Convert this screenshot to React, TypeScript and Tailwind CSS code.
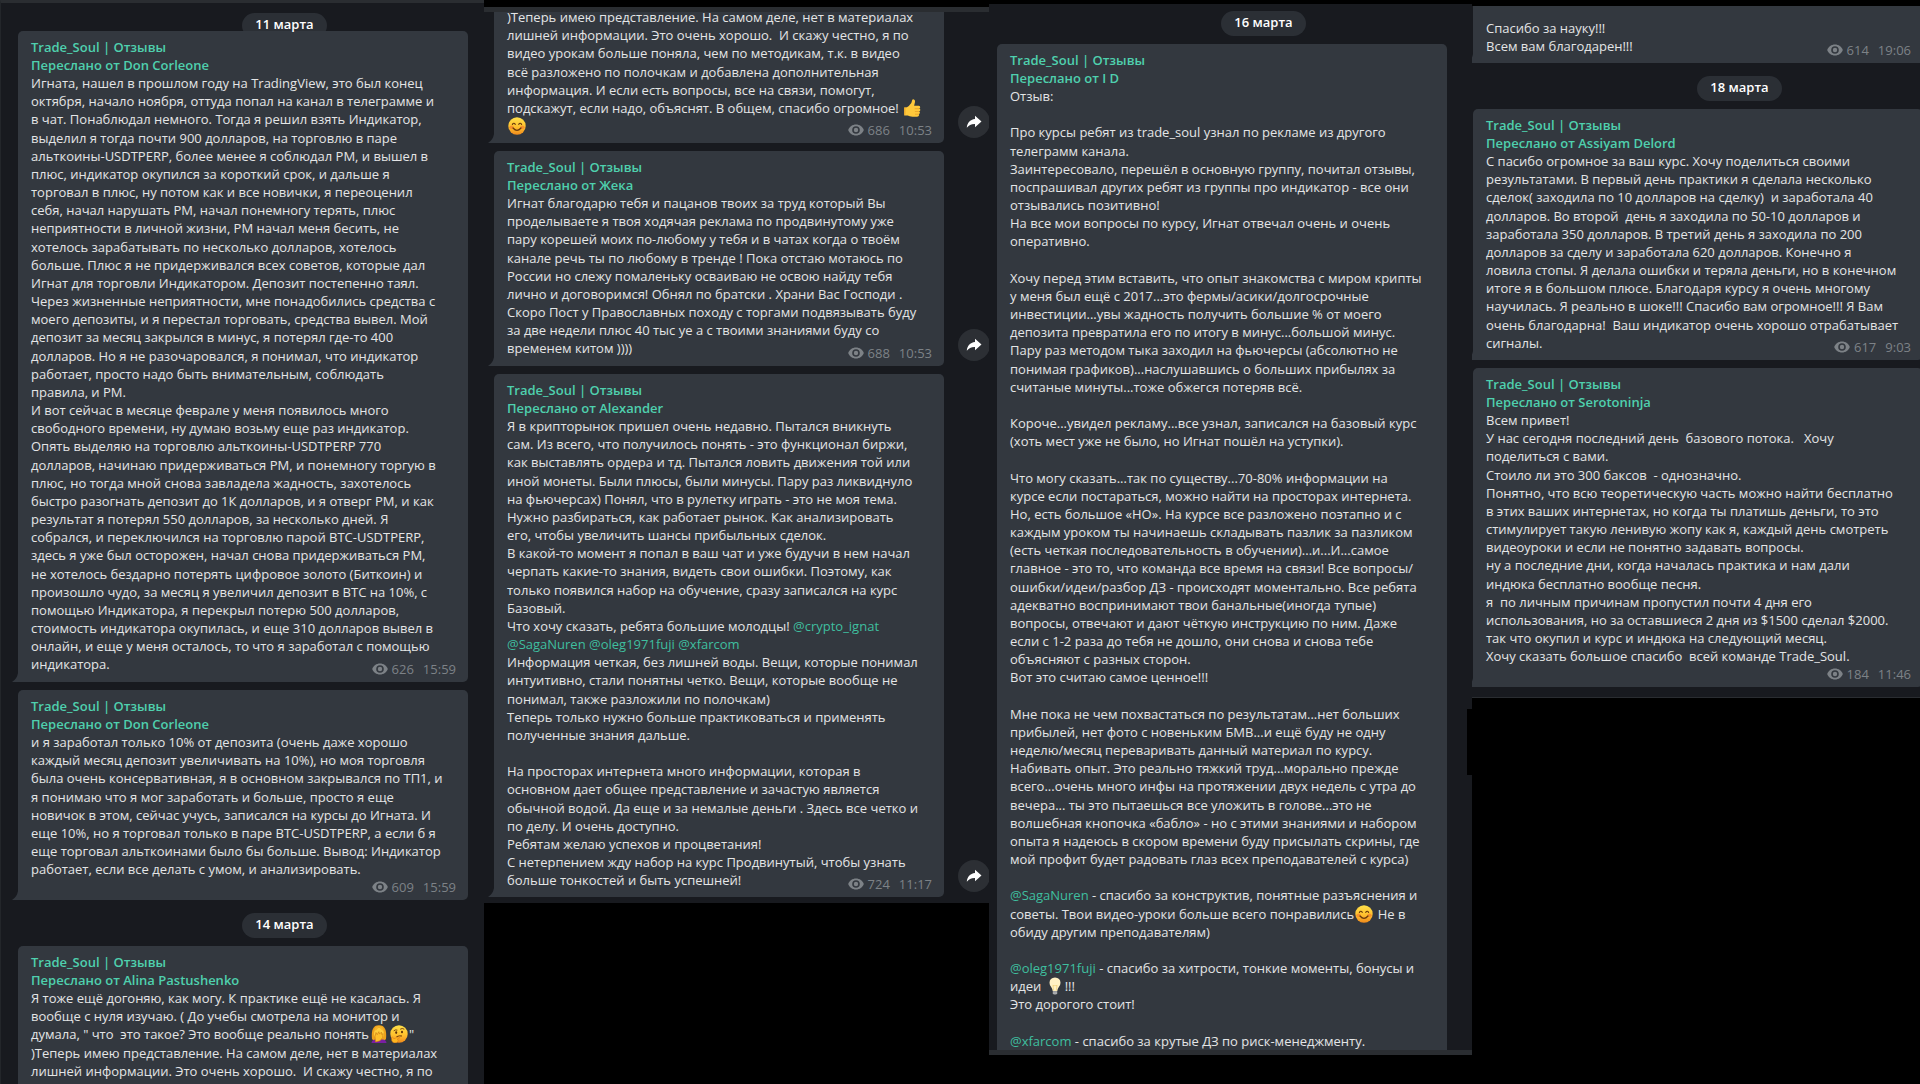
import type { ReactNode } from "react";

type EmojiName = "facepalm" | "thinking" | "thumb" | "smile" | "bulb";

type MessageData = {
  author?: string;
  lines: string[];
  views?: string;
  time?: string;
  share?: boolean;
  /** The views and time take a row of their own under the text. */
  metaRow?: boolean;
};

const column1a: MessageData[] = [
  {
    author: "Don Corleone",
    views: "626",
    time: "15:59",
    lines: [
      "Игната, нашел в прошлом году на TradingView, это был конец",
      "октября, начало ноября, оттуда попал на канал в телеграмме и",
      "в чат. Понаблюдал немного. Тогда я решил взять Индикатор,",
      "выделил я тогда почти 900 долларов, на торговлю в паре",
      "альткоины-USDTPERP, более менее я соблюдал РМ, и вышел в",
      "плюс, индикатор окупился за короткий срок, и дальше я",
      "торговал в плюс, ну потом как и все новички, я переоценил",
      "себя, начал нарушать РМ, начал понемногу терять, плюс",
      "неприятности в личной жизни, РМ начал меня бесить, не",
      "хотелось зарабатывать по несколько долларов, хотелось",
      "больше. Плюс я не придерживался всех советов, которые дал",
      "Игнат для торговли Индикатором. Депозит постепенно таял.",
      "Через жизненные неприятности, мне понадобились средства с",
      "моего депозиты, и я перестал торговать, средства вывел. Мой",
      "депозит за месяц закрылся в минус, я потерял где-то 400",
      "долларов. Но я не разочаровался, я понимал, что индикатор",
      "работает, просто надо быть внимательным, соблюдать",
      "правила, и РМ.",
      "И вот сейчас в месяце феврале у меня появилось много",
      "свободного времени, ну думаю возьму еще раз индикатор.",
      "Опять выделяю на торговлю альткоины-USDTPERP 770",
      "долларов, начинаю придерживаться РМ, и понемногу торгую в",
      "плюс, но тогда мной снова завладела жадность, захотелось",
      "быстро разогнать депозит до 1К долларов, и я отверг РМ, и как",
      "результат я потерял 550 долларов, за несколько дней. Я",
      "собрался, и переключился на торговлю парой BTC-USDTPERP,",
      "здесь я уже был осторожен, начал снова придерживаться РМ,",
      "не хотелось бездарно потерять цифровое золото (Биткоин) и",
      "произошло чудо, за месяц я увеличил депозит в BTC на 10%, с",
      "помощью Индикатора, я перекрыл потерю 500 долларов,",
      "стоимость индикатора окупилась, и еще 310 долларов вывел в",
      "онлайн, и еще у меня осталось, то что я заработал с помощью",
      "индикатора.",
    ],
  },
  {
    author: "Don Corleone",
    views: "609",
    time: "15:59",
    metaRow: true,
    lines: [
      "и я заработал только 10% от депозита (очень даже хорошо",
      "каждый месяц депозит увеличивать на 10%), но моя торговля",
      "была очень консервативная, я в основном закрывался по ТП1, и",
      "я понимаю что я мог заработать и больше, просто я еще",
      "новичок в этом, сейчас учусь, записался на курсы до Игната. И",
      "еще 10%, но я торговал только в паре BTC-USDTPERP, а если б я",
      "еще торговал альткоинами было бы больше. Вывод: Индикатор",
      "работает, если все делать с умом, и анализировать.",
    ],
  },
];

const column1b: MessageData = {
  author: "Alina Pastushenko",
  lines: [
    "Я тоже ещё догоняю, как могу. К практике ещё не касалась. Я",
    "вообще с нуля изучаю. ( До учебы смотрела на монитор и",
    'думала, " что  это такое? Это вообще реально понять{facepalm}{thinking}"',
    ")Теперь имею представление. На самом деле, нет в материалах",
    "лишней информации. Это очень хорошо.  И скажу честно, я по",
  ],
};

const column2: MessageData[] = [
  {
    views: "686",
    time: "10:53",
    share: true,
    lines: [
      ")Теперь имею представление. На самом деле, нет в материалах",
      "лишней информации. Это очень хорошо.  И скажу честно, я по",
      "видео урокам больше поняла, чем по методикам, т.к. в видео",
      "всё разложено по полочкам и добавлена дополнительная",
      "информация. И если есть вопросы, все на связи, помогут,",
      "подскажут, если надо, объяснят. В общем, спасибо огромное! {thumb}",
      "{smile}",
    ],
  },
  {
    author: "Жека",
    views: "688",
    time: "10:53",
    share: true,
    lines: [
      "Игнат благодарю тебя и пацанов твоих за труд который Вы",
      "проделываете я твоя ходячая реклама по продвинутому уже",
      "пару корешей моих по-любому у тебя и в чатах когда о твоём",
      "канале речь ты по любому в тренде ! Пока отстаю мотаюсь по",
      "России но слежу помаленьку осваиваю не освою найду тебя",
      "лично и договоримся! Обнял по братски . Храни Вас Господи .",
      "Скоро Пост у Православных походу с торгами подвязывать буду",
      "за две недели плюс 40 тыс уе а с твоими знаниями буду со",
      "временем китом ))))",
    ],
  },
  {
    author: "Alexander",
    views: "724",
    time: "11:17",
    share: true,
    lines: [
      "Я в крипторынок пришел очень недавно. Пытался вникнуть",
      "сам. Из всего, что получилось понять - это функционал биржи,",
      "как выставлять ордера и тд. Пытался ловить движения той или",
      "иной монеты. Были плюсы, были минусы. Пару раз ликвиднуло",
      "на фьючерсах) Понял, что в рулетку играть - это не моя тема.",
      "Нужно разбираться, как работает рынок. Как анализировать",
      "его, чтобы увеличить шансы прибыльных сделок.",
      "В какой-то момент я попал в ваш чат и уже будучи в нем начал",
      "черпать какие-то знания, видеть свои ошибки. Поэтому, как",
      "только появился набор на обучение, сразу записался на курс",
      "Базовый.",
      "Что хочу сказать, ребята большие молодцы! @crypto_ignat",
      "@SagaNuren @oleg1971fuji @xfarcom",
      "Информация четкая, без лишней воды. Вещи, которые понимал",
      "интуитивно, стали понятны четко. Вещи, которые вообще не",
      "понимал, также разложили по полочкам)",
      "Теперь только нужно больше практиковаться и применять",
      "полученные знания дальше.",
      "",
      "На просторах интернета много информации, которая в",
      "основном дает общее представление и зачастую является",
      "обычной водой. Да еще и за немалые деньги . Здесь все четко и",
      "по делу. И очень доступно.",
      "Ребятам желаю успехов и процветания!",
      "С нетерпением жду набор на курс Продвинутый, чтобы узнать",
      "больше тонкостей и быть успешней!",
    ],
  },
];

const column3: MessageData = {
  author: "I D",
  lines: [
    "Отзыв:",
    "",
    "Про курсы ребят из trade_soul узнал по рекламе из другого",
    "телеграмм канала.",
    "Заинтересовало, перешёл в основную группу, почитал отзывы,",
    "поспрашивал других ребят из группы про индикатор - все они",
    "отзывались позитивно!",
    "На все мои вопросы по курсу, Игнат отвечал очень и очень",
    "оперативно.",
    "",
    "Хочу перед этим вставить, что опыт знакомства с миром крипты",
    "у меня был ещё с 2017...это фермы/асики/долгосрочные",
    "инвестиции...увы жадность получить большие % от моего",
    "депозита превратила его по итогу в минус...большой минус.",
    "Пару раз методом тыка заходил на фьючерсы (абсолютно не",
    "понимая графиков)...наслушавшись о больших прибылях за",
    "считаные минуты...тоже обжегся потеряв всё.",
    "",
    "Короче...увидел рекламу...все узнал, записался на базовый курс",
    "(хоть мест уже не было, но Игнат пошёл на уступки).",
    "",
    "Что могу сказать...так по существу...70-80% информации на",
    "курсе если постараться, можно найти на просторах интернета.",
    "Но, есть большое «НО». На курсе все разложено поэтапно и с",
    "каждым уроком ты начинаешь складывать пазлик за пазликом",
    "(есть четкая последовательность в обучении)...и...И...самое",
    "главное - это то, что команда все время на связи! Все вопросы/",
    "ошибки/идеи/разбор ДЗ - происходят моментально. Все ребята",
    "адекватно воспринимают твои банальные(иногда тупые)",
    "вопросы, отвечают и дают чёткую инструкцию по ним. Даже",
    "если с 1-2 раза до тебя не дошло, они снова и снова тебе",
    "объясняют с разных сторон.",
    "Вот это считаю самое ценное!!!",
    "",
    "Мне пока не чем похвастаться по результатам...нет больших",
    "прибылей, нет фото с новеньким БМВ...и ещё буду не одну",
    "неделю/месяц переваривать данный материал по курсу.",
    "Набивать опыт. Это реально тяжкий труд...морально прежде",
    "всего...очень много инфы на протяжении двух недель с утра до",
    "вечера... ты это пытаешься все уложить в голове...это не",
    "волшебная кнопочка «бабло» - но с этими знаниями и набором",
    "опыта я надеюсь в скором времени буду присылать скрины, где",
    "мой профит будет радовать глаз всех преподавателей с курса)",
    "",
    "@SagaNuren - спасибо за конструктив, понятные разъяснения и",
    "советы. Твои видео-уроки больше всего понравились{smile} Не в",
    "обиду другим преподавателям)",
    "",
    "@oleg1971fuji - спасибо за хитрости, тонкие моменты, бонусы и",
    "идеи {bulb}!!!",
    "Это дорогого стоит!",
    "",
    "@xfarcom - спасибо за крутые ДЗ по риск-менеджменту.",
  ],
};

const column4a: MessageData = {
  views: "614",
  time: "19:06",
  lines: ["Спасибо за науку!!!", "Всем вам благодарен!!!"],
};

const column4b: MessageData[] = [
  {
    author: "Assiyam Delord",
    views: "617",
    time: "9:03",
    lines: [
      "С пасибо огромное за ваш курс. Хочу поделиться своими",
      "результатами. В первый день практики я сделала несколько",
      "сделок( заходила по 10 долларов на сделку)  и заработала 40",
      "долларов. Во второй  день я заходила по 50-10 долларов и",
      "заработала 350 долларов. В третий день я заходила по 200",
      "долларов за сделу и заработала 620 долларов. Конечно я",
      "ловила стопы. Я делала ошибки и теряла деньги, но в конечном",
      "итоге я в большом плюсе. Благодаря курсу я очень многому",
      "научилась. Я реально в шоке!!! Спасибо вам огромное!!! Я Вам",
      "очень благодарна!  Ваш индикатор очень хорошо отрабатывает",
      "сигналы.",
    ],
  },
  {
    author: "Serotoninja",
    views: "184",
    time: "11:46",
    metaRow: true,
    lines: [
      "Всем привет!",
      "У нас сегодня последний день  базового потока.   Хочу",
      "поделиться с вами.",
      "Стоило ли это 300 баксов  - однозначно.",
      "Понятно, что всю теоретическую часть можно найти бесплатно",
      "в этих ваших интернетах, но когда ты платишь деньги, то это",
      "стимулирует такую ленивую жопу как я, каждый день смотреть",
      "видеоуроки и если не понятно задавать вопросы.",
      "ну а последние дни, когда началась практика и нам дали",
      "индюка бесплатно вообще песня.",
      "я  по личным причинам пропустил почти 4 дня его",
      "использования, но за оставшиеся 2 дня из $1500 сделал $2000.",
      "так что окупил и курс и индюка на следующий месяц.",
      "Хочу сказать большое спасибо  всей команде Trade_Soul.",
    ],
  },
];

function Face() {
  return (
    <>
      <defs>
        <linearGradient id="face" x1="0" y1="0" x2="0" y2="1">
          <stop offset="0" stopColor="#ffe04a" />
          <stop offset="0.55" stopColor="#ffc12e" />
          <stop offset="1" stopColor="#f08a1c" />
        </linearGradient>
      </defs>
      <circle cx="9" cy="9" r="8.7" fill="url(#face)" />
    </>
  );
}

function Emoji({ name }: { name: EmojiName }) {
  const art: Record<EmojiName, ReactNode> = {
    smile: (
      <>
        <Face />
        <ellipse cx="3.6" cy="10.2" rx="2.2" ry="1.7" fill="#f3702a" opacity="0.55" />
        <ellipse cx="14.4" cy="10.2" rx="2.2" ry="1.7" fill="#f3702a" opacity="0.55" />
        <path d="M4.4 7.4q1.4-2.4 2.9 0M10.7 7.4q1.5-2.4 2.9 0" fill="none" stroke="#6b3a0c" strokeWidth="1.1" strokeLinecap="round" />
        <path d="M5 11q4 4.600 8 0" fill="none" stroke="#6b3a0c" strokeWidth="1.2" strokeLinecap="round" />
      </>
    ),
    thinking: (
      <>
        <Face />
        <path d="M4 5.600q1.400-1.200 3-.6M10.500 4q1.800-1.300 3.500 0" fill="none" stroke="#6b3a0c" strokeWidth="0.9" strokeLinecap="round" />
        <ellipse cx="6.200" cy="7.600" rx="1" ry="1.300" fill="#5c300a" />
        <ellipse cx="12" cy="7" rx="1" ry="1.300" fill="#5c300a" />
        <path d="M6.800 11.600q2.600-1.200 4.800-.7" fill="none" stroke="#6b3a0c" strokeWidth="1" strokeLinecap="round" />
        <path d="M1.600 12.600q.9-1 1.700.2l.5 1 4.900-1.900q1.300-.2 1 .9l-2.600 1.400q1.600.2 1 1.700-.8 2-3.200 2-2.700 0-3.200-2.300z" fill="#ffb61f" stroke="#d9791a" strokeWidth="0.5" />
      </>
    ),
    facepalm: (
      <>
        <path d="M2 14Q.6 0 9 .3q8.400-.2 7 13.700l-2 2H4z" fill="#eda11c" />
        <path d="M1.500 18q.3-3.400 4-3.600h7q3.700.2 4 3.600z" fill="#7a1fa2" />
        <ellipse cx="9" cy="8.800" rx="5" ry="6" fill="#ffce3d" />
        <path d="M4 6Q7 5.400 9 2q2 3 5 4-1-5-5-5T4 6z" fill="#f4b32a" />
        <path d="M5.500 17 5 11.500l1-4 1.200 2.200 1.600-3 .8 2.400 1.800-2 .3 2.400 1.500-.9-.7 4-2.500 3.200z" fill="#ffc02b" stroke="#c87a13" strokeWidth="0.6" />
      </>
    ),
    thumb: (
      <>
        <path
          d="M1.200 8.600q2.800.1 4.600-1.500Q9 4.300 9 1.800 9.100 0 10.300.2q2.200.5 1.600 3.400l-.8 3.200h4.600q1.700.2 1.500 1.600-.2 1.100-1.200 1.200 1.600.3 1.300 1.700-.2 1-1.300 1.200 1.100.3.900 1.500-.2 1-1.200 1.100.6.4.4 1.200-.3 1.400-2 1.400H9.500q-3.100 0-4.800-1.100H1.200z"
          fill="#ffc83b"
        />
        <path d="M11.700 9.700h4.300M11.900 12.500h4M12 15.200h3.600" stroke="#e49a22" strokeWidth="0.7" fill="none" />
        <path d="M1.200 8.600h1.300v7H1.200z" fill="#f0a92b" />
      </>
    ),
    bulb: (
      <>
        <path d="M9 .4q5.300.3 5.500 5.300 0 2.600-1.800 4.500Q11.500 11.800 11.300 14H6.700q-.2-2.200-1.400-3.800-1.800-1.900-1.800-4.500Q3.700.7 9 .4z" fill="#fff1c4" />
        <path d="M7.700 13.500 6.900 8.200l1.200.9.900-.9.900.9 1.200-.9-.8 5.300" fill="none" stroke="#e9c767" strokeWidth="0.6" />
        <path d="M6.800 14h4.400v2.400q-.6 1.400-2.200 1.400t-2.200-1.400z" fill="#8d8f92" />
        <path d="M6.800 15.200h4.400M6.900 16.400h4.200" stroke="#c6c8ca" strokeWidth="0.6" />
      </>
    ),
  };
  return (
    <svg viewBox="0 0 18 18" className="mx-px inline-block size-[18px] align-top" role="img" aria-label={name}>
      {art[name]}
    </svg>
  );
}

function renderLine(line: string): ReactNode {
  return line.split(/(@\w+|\{\w+\})/).map((part, i) => {
    if (part.startsWith("@")) {
      return (
        <a key={i} href={"#" + part.slice(1)} className="text-[#3fbf9f]">
          {part}
        </a>
      );
    }
    if (part.startsWith("{")) {
      return <Emoji key={i} name={part.slice(1, -1) as EmojiName} />;
    }
    return part;
  });
}

function EyeIcon() {
  return (
    <svg viewBox="0 0 16 12" className="h-3 w-4" aria-hidden="true">
      <path d="M8 .5C4.400.500 1.400 2.700.2 6c1.200 3.300 4.200 5.500 7.800 5.500s6.600-2.200 7.800-5.500C14.600 2.700 11.600.5 8 .5z" fill="currentColor" />
      <circle cx="8" cy="6" r="3.800" fill="#33383f" />
      <circle cx="8" cy="6" r="2.200" fill="currentColor" />
    </svg>
  );
}

function ShareButton() {
  return (
    <button
      type="button"
      aria-label="Переслать"
      className="absolute bottom-[5px] left-full ml-3.5 flex size-8 items-center justify-center rounded-full bg-[#2c2f34] text-white"
    >
      <svg viewBox="0 0 16 14" className="h-3.5 w-4" aria-hidden="true">
        <path d="M9 .8 15.500 6.500 9 12.200V8.900C5.200 8.800 2.800 10 .8 12.800 1.200 8.200 4 4.600 9 4.100z" fill="currentColor" />
      </svg>
    </button>
  );
}

function Tail() {
  return (
    <svg viewBox="0 0 6 9" className="absolute bottom-0 right-full h-[9px] w-1.5" aria-hidden="true">
      <path d="M6 0v9H0q5-3 6-9z" fill="#33383f" />
    </svg>
  );
}

function Message({ data, shape = "rounded-[5px] rounded-bl-none" }: { data: MessageData; shape?: string }) {
  const { author, lines, views, time, share, metaRow } = data;
  return (
    <article className={"relative w-[450px] bg-[#33383f] px-[13px] " + shape}>
      {author && (
        <header className="pt-[7px] font-semibold leading-[18px] text-[#4fd0ae]">
          <h2>Trade_Soul | Отзывы</h2>
          <h3>Переслано от {author}</h3>
        </header>
      )}
      <div className="whitespace-pre text-[#e4e5e6] [&>p:nth-child(6n+3)]:h-[19px]">
        {lines.map((line, i) => (
          <p key={i} className="h-[18px] leading-[18px]">
            {renderLine(line)}
          </p>
        ))}
      </div>
      {time && (
        <>
          <div className={metaRow ? "h-[22px]" : "h-2"} />
          <footer className="absolute bottom-1 right-3 flex items-center gap-1 leading-[18px] text-[#7d8287]">
            <EyeIcon />
            <span>{views}</span>
            <time className="ml-[5px]">{time}</time>
          </footer>
          <Tail />
        </>
      )}
      {share && <ShareButton />}
    </article>
  );
}

function DatePill({ children }: { children: ReactNode }) {
  return (
    <div className="ml-[224px] flex h-[25px] w-[85px] items-center justify-center rounded-full bg-[#2b2f35] pb-0.5 font-semibold text-white">
      <span className="relative z-10">{children}</span>
    </div>
  );
}

export default function App() {
  return (
    <main className="grid h-screen grid-cols-[484fr_505fr_483fr_448fr] items-start overflow-hidden bg-black font-['Open_Sans','Noto_Sans',sans-serif] text-[13px]">
      <section className="flex h-screen min-w-0 flex-col overflow-hidden border-l border-t-[3px] border-l-[#23262a] border-t-[#2a2d31] bg-[#181a1f] pl-[17px]">
        <div className="mt-2.5">
          <DatePill>11 марта</DatePill>
        </div>
        <div className="-mt-[7px] flex flex-col gap-2">
          {column1a.map((m, i) => (
            <Message key={i} data={m} />
          ))}
        </div>
        <div className="mb-2 mt-[13px]">
          <DatePill>14 марта</DatePill>
        </div>
        <Message data={column1b} shape="grow rounded-t-[5px]" />
      </section>

      <section className="mt-[7px] min-w-0 overflow-hidden border-t-[5px] border-[#2a2d31] bg-[#181a1f] pb-1.5 pl-2.5">
        <div className="-mt-1 flex flex-col gap-2">
          {column2.map((m, i) => (
            <Message key={i} data={m} />
          ))}
        </div>
      </section>

      <section className="mt-1 min-w-0 overflow-hidden border-b-[5px] border-[#2a2d31] bg-[#181a1f] pl-2 pt-[7px]">
        <DatePill>16 марта</DatePill>
        <div className="mt-2">
          <Message data={column3} shape="rounded-t-[5px]" />
        </div>
      </section>

      <section className="relative mt-1.5 min-w-0">
        <div className="overflow-hidden border-b border-[#2a2d31] bg-[#181a1f] pb-2.5 pl-px">
          <div className="w-[450px] bg-[#33383f] pt-[13px]">
            <Message data={column4a} shape="" />
          </div>
          <div className="mb-2 mt-[13px]">
            <DatePill>18 марта</DatePill>
          </div>
          <div className="flex flex-col gap-2">
            {column4b.map((m, i) => (
              <Message key={i} data={m} />
            ))}
          </div>
        </div>
        <div className="absolute right-full top-[703px] h-[66px] w-[5px] bg-black" />
      </section>
    </main>
  );
}
